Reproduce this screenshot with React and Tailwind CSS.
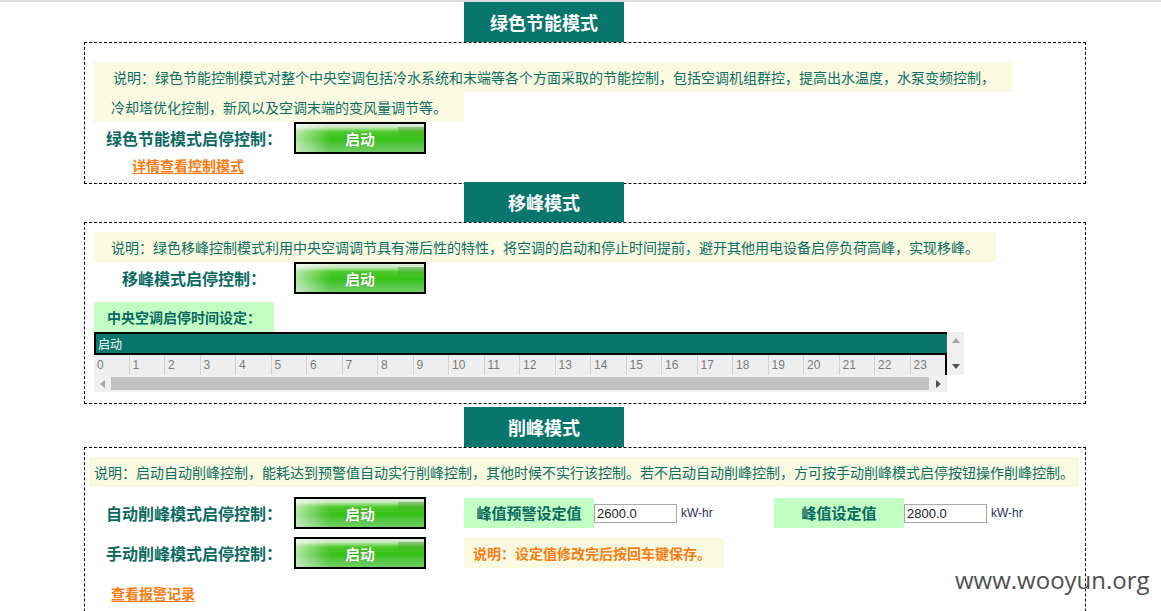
import React from "react";

const FONT = { fontFamily: '"Noto Sans CJK SC", "Noto Sans", sans-serif' };

function Header({ title, className = "" }) {
  return (
    <div
      className={`ml-[380px] w-[160px] h-[40px] bg-[#08766c] flex items-center justify-center text-white font-bold text-[18px] ${className}`}
    >
      {title}
    </div>
  );
}

function StartButton() {
  return (
    <div className="relative w-[132px] h-[32px] shrink-0 border-2 border-black bg-[linear-gradient(to_bottom,#e2ece0_0%,#c4e8b9_12%,#4fca2c_28%,#36c218_55%,#52c641_74%,#72cd64_100%)] flex items-center justify-center overflow-hidden">
      <span className="absolute left-0 top-0 w-[34px] h-full bg-[linear-gradient(to_right,rgba(255,255,255,0.6),rgba(255,255,255,0))]" />
      <span className="absolute right-0 top-[3px] w-[26px] h-[10px] bg-[linear-gradient(to_bottom,rgba(30,120,20,0.35),rgba(30,120,20,0))]" />
      <span className="relative text-white font-bold text-[15px] leading-none [text-shadow:0_0_1px_rgba(0,80,0,0.6)]">
        启动
      </span>
    </div>
  );
}

function Label({ children }) {
  return (
    <div className="w-[200px] shrink-0 text-center text-[16px] font-bold text-[#0a6a62]">
      {children}
    </div>
  );
}

function ControlRow({ label, children, className = "" }) {
  return (
    <div className={`flex items-center h-[32px] pl-[9px] ${className}`}>
      <Label>{label}</Label>
      <StartButton />
      {children}
    </div>
  );
}

const hours = Array.from({ length: 24 }, (_, i) => i);

function TimeTable() {
  return (
    <div className="ml-[9px] flex">
      <div className="w-[853px]">
        <div className="h-[23px] bg-[#08766c] border-t-2 border-b-2 border-l-2 border-black flex items-center pl-[2px] text-white text-[12px] leading-none">
          启动
        </div>
        <div className="h-[20px] bg-[#eeeeee] border-r-2 border-black flex">
          {hours.map((h) => (
            <div
              key={h}
              className="flex-1 border-r border-[#d2d2d2] last:border-r-0 pl-[3px] text-[12px] leading-[20px] text-[#7a7a7a]"
              style={{ fontFamily: '"Liberation Sans", Arial, sans-serif' }}
            >
              {h}
            </div>
          ))}
        </div>
        <div className="h-[17px] bg-[#f0f0f0] flex items-center">
          <div className="w-[17px] h-full flex items-center justify-center">
            <svg width="5" height="8" viewBox="0 0 5 8">
              <path d="M5 0 L0 4 L5 8 Z" fill="#a3a3a3" />
            </svg>
          </div>
          <div className="flex-1 h-[13px] bg-[#c1c1c1]" />
          <div className="w-[18px] h-full flex items-center justify-center">
            <svg width="5" height="8" viewBox="0 0 5 8">
              <path d="M0 0 L5 4 L0 8 Z" fill="#505050" />
            </svg>
          </div>
        </div>
      </div>
      <div className="w-[17px] h-[43px] bg-[#f0f0f0] flex flex-col items-center justify-between py-[6px]">
        <svg width="8" height="5" viewBox="0 0 8 5">
          <path d="M0 5 L4 0 L8 5 Z" fill="#a3a3a3" />
        </svg>
        <svg width="8" height="5" viewBox="0 0 8 5">
          <path d="M0 0 L4 5 L8 0 Z" fill="#505050" />
        </svg>
      </div>
    </div>
  );
}

function ValueField({ title, value }) {
  return (
    <>
      <div className="w-[130px] h-[30px] shrink-0 bg-[#c2ffc2] flex items-center justify-center text-[15px] font-bold text-[#0a6a62]">
        {title}
      </div>
      <div
        className="w-[83px] h-[19px] shrink-0 border border-[#a9a9a9] bg-white px-[2px] text-[13px] leading-[17px] text-[#222]"
        style={{ fontFamily: '"Liberation Sans", Arial, sans-serif' }}
      >
        {value}
      </div>
      <div
        className="w-[97px] shrink-0 pl-[4px] text-[12px] text-[#2e2e5e]"
        style={{ fontFamily: '"Liberation Sans", Arial, sans-serif' }}
      >
        kW-hr
      </div>
    </>
  );
}

export default function App() {
  return (
    <div
      className="relative w-[1161px] h-[611px] overflow-hidden bg-white"
      style={FONT}
    >
      <div className="h-[2px] bg-[#dcdcdc]" />
      <div className="ml-[84px] w-[1002px]">
        {/* Section 1 */}
        <Header title="绿色节能模式" />
        <div className="h-[142px] border border-dashed border-black pt-[19px]">
          <div className="ml-[9px] text-[14px] leading-[30px] text-[#0b6e64]">
            <div className="w-fit bg-[#fafae0] pl-[19px] pr-[18px] whitespace-nowrap">
              说明：绿色节能控制模式对整个中央空调包括冷水系统和末端等各个方面采取的节能控制，包括空调机组群控，提高出水温度，水泵变频控制，
            </div>
            <div className="w-fit bg-[#fafae0] pl-[17px] pr-[17px] whitespace-nowrap">
              冷却塔优化控制，新风以及空调末端的变风量调节等。
            </div>
          </div>
          <ControlRow label="绿色节能模式启停控制：" />
          <div className="pl-[47px] leading-[20px]">
            <span className="text-[14px] font-bold text-[#fb7d14] underline underline-offset-2">
              详情查看控制模式
            </span>
          </div>
        </div>

        {/* Section 2 */}
        <Header title="移峰模式" className="-mt-[2px]" />
        <div className="h-[182px] border border-dashed border-black pt-[9px]">
          <div className="ml-[9px] w-fit bg-[#fafae0] px-[17px] text-[14px] leading-[30px] text-[#0b6e64] whitespace-nowrap">
            说明：绿色移峰控制模式利用中央空调调节具有滞后性的特性，将空调的启动和停止时间提前，避开其他用电设备启停负荷高峰，实现移峰。
          </div>
          <ControlRow label="移峰模式启停控制：" />
          <div className="mt-[8px] ml-[9px] w-[180px] h-[30px] bg-[#c2ffc2] pl-[13px] text-[14px] font-bold leading-[30px] text-[#0a6a62]">
            中央空调启停时间设定：
          </div>
          <TimeTable />
        </div>

        {/* Section 3 */}
        <Header title="削峰模式" className="mt-[3px]" />
        <div className="h-[200px] border border-dashed border-black pt-[9px]">
          <div className="ml-[4px] w-fit bg-[#fafae0] px-[5px] text-[14px] leading-[30px] text-[#0b6e64] whitespace-nowrap">
            说明：启动自动削峰控制，能耗达到预警值自动实行削峰控制，其他时候不实行该控制。若不启动自动削峰控制，方可按手动削峰模式启停按钮操作削峰控制。
          </div>
          <ControlRow label="自动削峰模式启停控制：" className="mt-[10px]">
            <div className="ml-[38px] flex items-center">
              <ValueField title="峰值预警设定值" value="2600.0" />
              <ValueField title="峰值设定值" value="2800.0" />
            </div>
          </ControlRow>
          <ControlRow label="手动削峰模式启停控制：" className="mt-[8px]">
            <div className="ml-[38px] w-[260px] h-[30px] bg-[#fafae0] pl-[9px] text-[14px] font-bold leading-[30px] text-[#fb7d14]">
              说明：设定值修改完后按回车键保存。
            </div>
          </ControlRow>
          <div className="mt-[13px] pl-[26px] leading-[20px]">
            <span className="text-[14px] font-bold text-[#fb7d14] underline underline-offset-2">
              查看报警记录
            </span>
          </div>
        </div>
      </div>

      <div
        className="absolute left-[955px] top-[568px] text-[24px] text-[#3c3c3c] opacity-90 leading-none"
        style={{ fontFamily: '"Open Sans", sans-serif' }}
      >
        www.wooyun.org
      </div>
    </div>
  );
}
